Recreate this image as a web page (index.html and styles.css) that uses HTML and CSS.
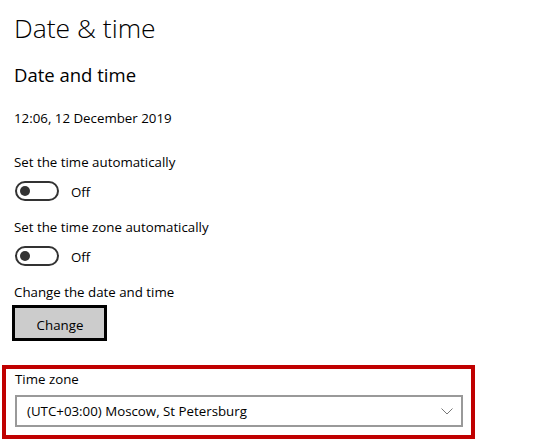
FILE: index.html
```html
<!DOCTYPE html>
<html lang="en">
<head>
<meta charset="utf-8">
<title>Date &amp; time</title>
<link rel="stylesheet" href="styles.css">
</head>
<body>
<main class="page">
  <h1 class="title">Date &amp; time</h1>
  <h2 class="subtitle">Date and time</h2>
  <p class="now">12:06, 12 December 2019</p>

  <div class="setting">
    <div class="label">Set the time automatically</div>
    <div class="toggle-row">
      <span class="toggle"><span class="knob"></span></span>
      <span class="state">Off</span>
    </div>
  </div>

  <div class="setting">
    <div class="label">Set the time zone automatically</div>
    <div class="toggle-row">
      <span class="toggle"><span class="knob"></span></span>
      <span class="state">Off</span>
    </div>
  </div>

  <div class="setting setting-change">
    <div class="label">Change the date and time</div>
    <button class="btn" type="button">Change</button>
  </div>

  <section class="tz">
    <div class="label">Time zone</div>
    <div class="select">
      <span class="select-text">(UTC+03:00) Moscow, St Petersburg</span>
      <svg class="chevron" width="12" height="7" viewBox="0 0 12 7" aria-hidden="true">
        <polyline points="0.5,0.5 6,6 11.5,0.5" fill="none" stroke="#777" stroke-width="1"/>
      </svg>
    </div>
  </section>
</main>
</body>
</html>
```

FILE: styles.css
```css
html, body {
  margin: 0;
  padding: 0;
  background: #fff;
}

body {
  font-family: "Open Sans", "Noto Sans", "Liberation Sans", sans-serif;
  font-size: 13.3px;
  line-height: 20px;
  color: #000;
}

.page {
  padding: 11px 0 0 14px;
}

.title {
  margin: 0;
  font-size: 26.5px;
  font-weight: 300;
  line-height: 34px;
}

.subtitle {
  margin: 17px 0 0;
  font-size: 18.5px;
  font-weight: 400;
  line-height: 26px;
}

.now {
  margin: 20px 0 0;
}

.setting {
  margin-top: 16px;
}

.now + .setting {
  margin-top: 24px;
}

.toggle-row {
  display: flex;
  align-items: center;
  gap: 12px;
  height: 20px;
  margin-top: 9px;
  margin-left: 1px;
}

.state {
  padding-top: 1px;
}

.toggle {
  box-sizing: border-box;
  width: 44px;
  height: 20px;
  border: 2px solid #333;
  border-radius: 10px;
  display: flex;
  align-items: center;
  padding-left: 3px;
}

.knob {
  width: 10px;
  height: 10px;
  border-radius: 50%;
  background: #333;
}

.btn {
  display: block;
  box-sizing: border-box;
  width: 95px;
  height: 36px;
  margin: 3px 0 0 -2px;
  padding: 4px 0 0 1px;
  border: 3px solid #000;
  background: #ccc;
  font: inherit;
  line-height: 26px;
  color: #000;
}

.tz {
  box-sizing: border-box;
  width: 473px;
  margin: 24px 0 0 -12px;
  padding: 0 8px 8px 9px;
  border: 4px solid #c00000;
}

.select {
  box-sizing: border-box;
  height: 32px;
  margin-top: 6px;
  border: 2px solid #999;
  display: flex;
  align-items: center;
  justify-content: space-between;
  padding: 0 8px 0 10px;
}

.chevron {
  display: block;
}
```
